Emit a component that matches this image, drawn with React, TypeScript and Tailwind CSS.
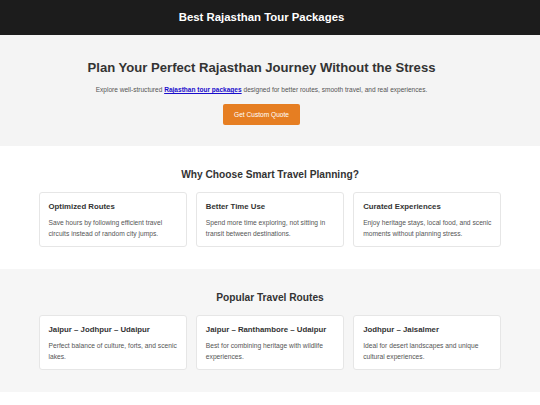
import React from "react";

const reasons = [
  {
    title: "Optimized Routes",
    text: "Save hours by following efficient travel circuits instead of random city jumps.",
  },
  {
    title: "Better Time Use",
    text: "Spend more time exploring, not sitting in transit between destinations.",
  },
  {
    title: "Curated Experiences",
    text: "Enjoy heritage stays, local food, and scenic moments without planning stress.",
  },
];

const routes = [
  {
    title: "Jaipur – Jodhpur – Udaipur",
    text: "Perfect balance of culture, forts, and scenic lakes.",
  },
  {
    title: "Jaipur – Ranthambore – Udaipur",
    text: "Best for combining heritage with wildlife experiences.",
  },
  {
    title: "Jodhpur – Jaisalmer",
    text: "Ideal for desert landscapes and unique cultural experiences.",
  },
];

const Card: React.FC<{ title: string; text: string }> = ({ title, text }) => (
  <div className="rounded-[3px] border border-[#e6e6e6] bg-white px-[9px] pb-[7px] pt-[8px]">
    <h3 className="text-[7.8px] font-bold leading-[11px] text-[#333]">{title}</h3>
    <p className="mt-[5px] text-[6.7px] leading-[11px] text-[#555]">{text}</p>
  </div>
);

const Section: React.FC<{
  title: string;
  items: { title: string; text: string }[];
  bg: string;
}> = ({ title, items, bg }) => (
  <section className={`${bg} pb-[22px] pt-[22px]`}>
    <h2 className="text-center text-[10.2px] font-bold leading-[14px] text-[#333]">{title}</h2>
    <div className="mx-auto mt-[10px] grid w-[463px] grid-cols-3 gap-[9px]">
      {items.map((item, i) => (
        <Card key={i} title={item.title} text={item.text} />
      ))}
    </div>
  </section>
);

export default function App() {
  return (
    <div className="min-h-[405px] bg-white font-['Liberation_Sans',Arial,sans-serif]">
      <header className="flex h-[35px] items-center justify-center bg-[#1c1c1c] pr-[17px]">
        <h1 className="text-[11.4px] font-bold text-white">Best Rajasthan Tour Packages</h1>
      </header>

      <section className="flex flex-col items-center bg-[#f4f4f4] pb-[21px] pr-[17px] pt-[23px]">
        <h2 className="text-[13.1px] font-bold leading-[20px] text-[#333]">
          Plan Your Perfect Rajasthan Journey Without the Stress
        </h2>
        <p className="mt-[7px] text-[6.55px] leading-[10px] text-[#555]">
          Explore well-structured{" "}
          <a href="#" className="font-bold text-[#1a0dcc] underline">
            Rajasthan tour packages
          </a>{" "}
          designed for better routes, smooth travel, and real experiences.
        </p>
        <button className="mt-[9px] h-[21px] rounded-[2px] bg-[#e67e22] px-[11px] text-[6.6px] text-white">
          Get Custom Quote
        </button>
      </section>

      <Section title="Why Choose Smart Travel Planning?" items={reasons} bg="bg-white" />
      <Section title="Popular Travel Routes" items={routes} bg="bg-[#f6f6f6]" />
    </div>
  );
}
